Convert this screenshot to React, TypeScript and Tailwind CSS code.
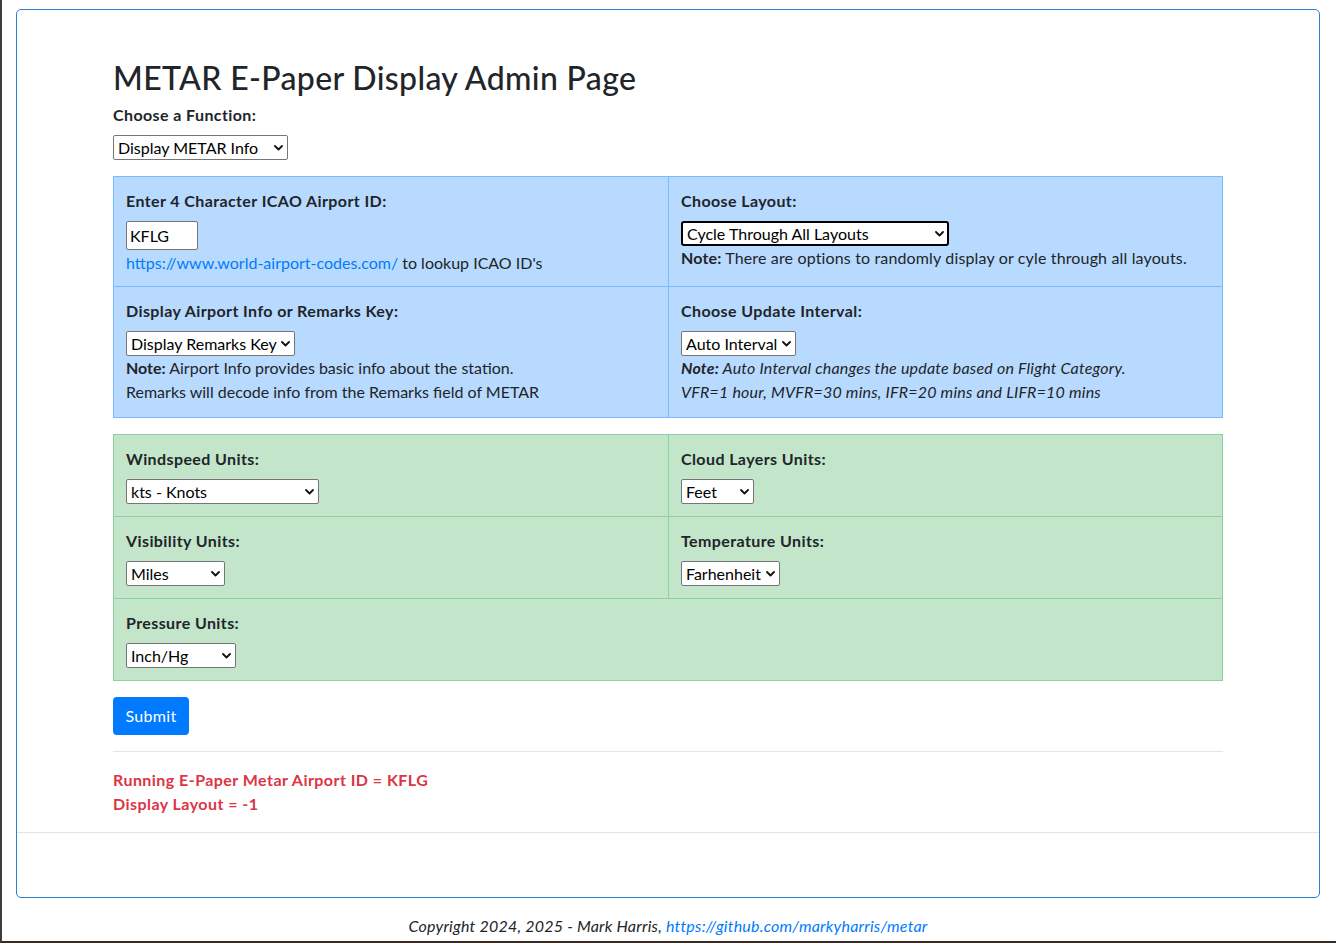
import React from 'react';

const FONT = "font-['Lato','Liberation_Sans',sans-serif]";

const Chevron = () => (
  <svg
    className="pointer-events-none absolute right-[5px] top-1/2 -translate-y-1/2"
    width="9"
    height="6"
    viewBox="0 0 9 6"
    fill="none"
  >
    <path d="M1 1l3.5 3.5L8 1" stroke="#111" strokeWidth="1.8" strokeLinecap="round" strokeLinejoin="round" />
  </svg>
);

interface SelectProps {
  value: string;
  options: string[];
  width: string;
  focused?: boolean;
}

const Select: React.FC<SelectProps> = ({ value, options, width, focused }) => (
  <div className={`relative block ${width}`}>
    <select
      defaultValue={value}
      className={`block h-[25px] w-full appearance-none bg-white pl-[4px] pr-[16px] text-[16px] leading-[21px] text-black ${
        focused ? 'rounded-[3px] border-2 border-black pl-[3px]' : 'rounded-[2px] border border-[#767676]'
      }`}
    >
      {options.map((o) => (
        <option key={o}>{o}</option>
      ))}
    </select>
    <Chevron />
  </div>
);

const Label: React.FC<{ children: React.ReactNode }> = ({ children }) => (
  <div className="mb-2 font-bold leading-6 tracking-[0.4px]">{children}</div>
);

export default function App() {
  return (
    <div className={`${FONT} min-h-screen border-l-2 border-[#3c3c3c] bg-white text-[16px] leading-6 text-[#212529]`}>
      <div className="pt-[9px] pr-[16px] pl-[14px]">
        <div className="rounded-[5px] border border-[#2f7fcf]">
          <div className="px-[96px] pt-[49px]">
            <h2 className="mb-[6px] text-[32px] font-medium leading-[38px] tracking-[0.35px]">METAR E-Paper Display Admin Page</h2>
            <Label>Choose a Function:</Label>
            <div className="mb-4">
              <Select value="Display METAR Info" options={['Display METAR Info', 'Display Custom Message', 'Clear Display']} width="w-[175px]" />
            </div>

            <div className="mb-4 grid grid-cols-[555px_1fr] border border-[#7abaff] bg-[#b8daff]">
              <div className="border-r border-b border-[#7abaff] px-3 pt-3 pb-[11px]">
                <Label>Enter 4 Character ICAO Airport ID:</Label>
                <input
                  defaultValue="KFLG"
                  className="block h-[29px] w-[72px] rounded-[2px] border border-[#767676] bg-white px-[3px] text-[16px] text-black outline-none"
                />
                <div className="mt-[1px]">
                  <a href="#" className="text-[#007bff]">https://www.world-airport-codes.com/</a> to lookup ICAO ID's
                </div>
              </div>
              <div className="border-b border-[#7abaff] px-3 pt-3 pb-3">
                <Label>Choose Layout:</Label>
                <Select
                  value="Cycle Through All Layouts"
                  options={['Cycle Through All Layouts', 'Random Layout', 'Layout 1', 'Layout 2']}
                  width="w-[268px]"
                  focused
                />
                <div className="tracking-[0.15px]">
                  <b>Note:</b> There are options to randomly display or cyle through all layouts.
                </div>
              </div>
              <div className="border-r border-[#7abaff] px-3 pt-3 pb-[13px]">
                <Label>Display Airport Info or Remarks Key:</Label>
                <Select value="Display Remarks Key" options={['Display Remarks Key', 'Display Airport Info']} width="w-[169px]" />
                <div>
                  <b>Note:</b> Airport Info provides basic info about the station.
                </div>
                <div>Remarks will decode info from the Remarks field of METAR</div>
              </div>
              <div className="px-3 pt-3 pb-[13px]">
                <Label>Choose Update Interval:</Label>
                <Select value="Auto Interval" options={['Auto Interval', '10 mins', '30 mins', '1 hour']} width="w-[115px]" />
                <div className="italic tracking-[0.2px]">
                  <b>Note:</b> Auto Interval changes the update based on Flight Category.
                </div>
                <div className="italic tracking-[0.2px]">VFR=1 hour, MVFR=30 mins, IFR=20 mins and LIFR=10 mins</div>
              </div>
            </div>

            <div className="mb-4 grid grid-cols-[555px_1fr] border border-[#8fd19e] bg-[#c3e6cb]">
              <div className="border-r border-b border-[#8fd19e] px-3 pt-3 pb-3">
                <Label>Windspeed Units:</Label>
                <Select value="kts - Knots" options={['kts - Knots', 'mph - Miles per Hour', 'km/h - Kilometers']} width="w-[193px]" />
              </div>
              <div className="border-b border-[#8fd19e] px-3 pt-3 pb-3">
                <Label>Cloud Layers Units:</Label>
                <Select value="Feet" options={['Feet', 'Meters']} width="w-[73px]" />
              </div>
              <div className="border-r border-b border-[#8fd19e] px-3 pt-3 pb-3">
                <Label>Visibility Units:</Label>
                <Select value="Miles" options={['Miles', 'Kilometers']} width="w-[99px]" />
              </div>
              <div className="border-b border-[#8fd19e] px-3 pt-3 pb-3">
                <Label>Temperature Units:</Label>
                <Select value="Farhenheit" options={['Farhenheit', 'Celsius']} width="w-[99px]" />
              </div>
              <div className="col-span-2 px-3 pt-3 pb-3">
                <Label>Pressure Units:</Label>
                <Select value="Inch/Hg" options={['Inch/Hg', 'Millibars', 'hPa']} width="w-[110px]" />
              </div>
            </div>

            <button className="h-[38px] w-[76px] rounded-[4px] bg-[#007bff] text-[16px] leading-6 tracking-[0.3px] text-white">Submit</button>

            <hr className="my-4 border-t border-[#e5e5e5]" />

            <div className="pb-4 font-bold tracking-[0.45px] text-[#dc3545]">
              <div>Running E-Paper Metar Airport ID = KFLG</div>
              <div>Display Layout = -1</div>
            </div>
          </div>
          <div className="h-[65px] border-t border-[#e3e3e3]" />
        </div>
        <div className="pt-4 pb-[3px] text-center italic tracking-[0.22px] text-[#212529]">
          Copyright 2024, 2025 - Mark Harris,{' '}
          <a href="#" className="text-[#007bff]">https://github.com/markyharris/metar</a>
        </div>
      </div>
      <div className="h-[3px] bg-[#3a2a20]" />
    </div>
  );
}
